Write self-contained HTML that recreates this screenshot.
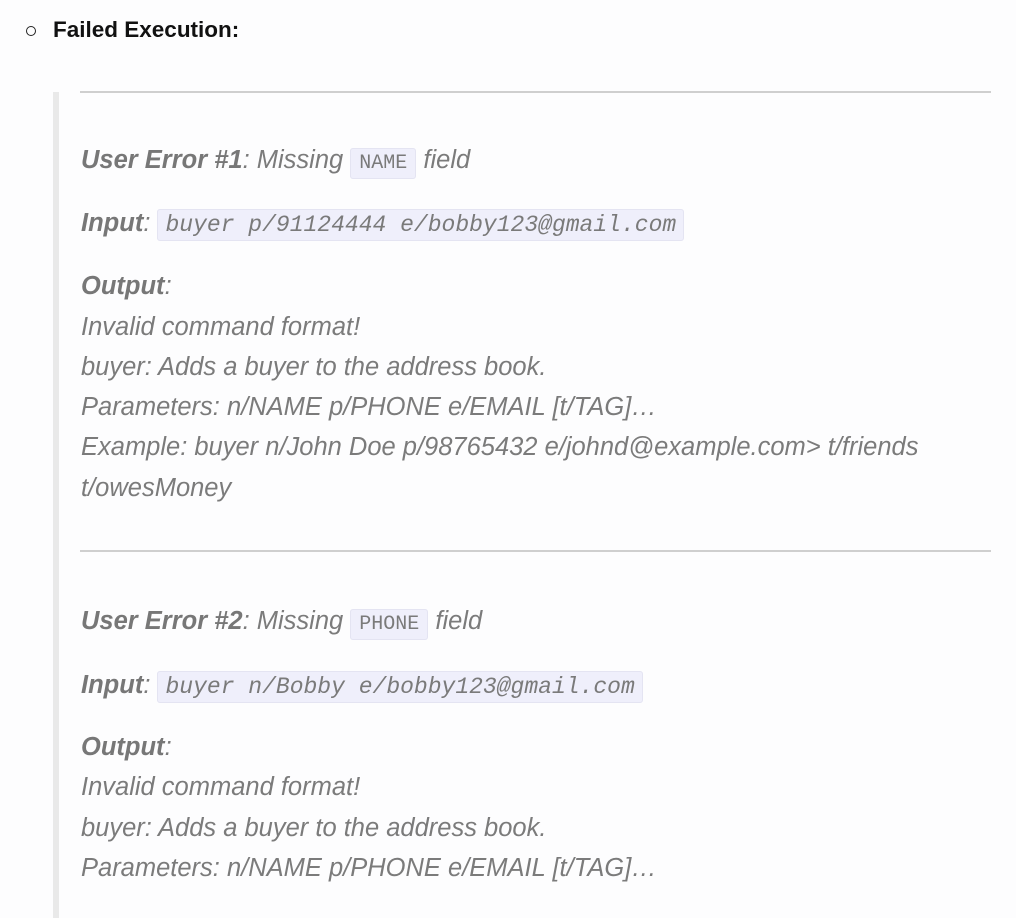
<!DOCTYPE html>
<html><head><meta charset="utf-8"><style>
body{margin:0;width:1016px;height:918px;background:#fdfdfe;position:relative;overflow:hidden;font-family:"Liberation Sans",sans-serif}
.l{position:absolute;left:81px;height:40px;line-height:40px;font-size:25.5px;font-style:italic;color:#7b7b7b;white-space:nowrap}
b{font-weight:bold;color:#777}
code{font-family:"Liberation Mono",monospace;font-size:23px;background:#efeffb;border:1px solid #e4e4f2;border-radius:3px;padding:2px 7px;color:#7a7a7a}
.s{font-size:20px;font-style:normal;padding:3px 8px}
.hr{position:absolute;left:80px;width:911px;height:2px;background:#cfcfcf}
</style></head><body>
<div style="position:absolute;left:26px;top:26px;width:8px;height:8px;border:1.5px solid #222;border-radius:50%"></div>
<div style="position:absolute;left:53px;top:14px;font-size:22.5px;font-weight:bold;color:#111;line-height:32px">Failed Execution:</div>
<div style="position:absolute;left:53px;top:92px;width:6px;height:826px;background:#e9e9e9"></div>
<div class="hr" style="top:91px"></div>
<div class="l" style="top:140px"><b>User Error #1</b>: Missing <code class="s">NAME</code> field</div>
<div class="l" style="top:203px"><b>Input</b>: <code>buyer p/91124444 e/bobby123@gmail.com</code></div>
<div class="l" style="top:266px"><b>Output</b>:</div>
<div class="l" style="top:307px">Invalid command format!</div>
<div class="l" style="top:347px">buyer: Adds a buyer to the address book.</div>
<div class="l" style="top:387px">Parameters: n/NAME p/PHONE e/EMAIL [t/TAG]…</div>
<div class="l" style="top:427px">Example: buyer n/John Doe p/98765432 e/johnd@example.com&gt; t/friends</div>
<div class="l" style="top:468px">t/owesMoney</div>
<div class="hr" style="top:550px"></div>
<div class="l" style="top:601px"><b>User Error #2</b>: Missing <code class="s">PHONE</code> field</div>
<div class="l" style="top:665px"><b>Input</b>: <code>buyer n/Bobby e/bobby123@gmail.com</code></div>
<div class="l" style="top:727px"><b>Output</b>:</div>
<div class="l" style="top:767px">Invalid command format!</div>
<div class="l" style="top:808px">buyer: Adds a buyer to the address book.</div>
<div class="l" style="top:848px">Parameters: n/NAME p/PHONE e/EMAIL [t/TAG]…</div>
</body></html>
